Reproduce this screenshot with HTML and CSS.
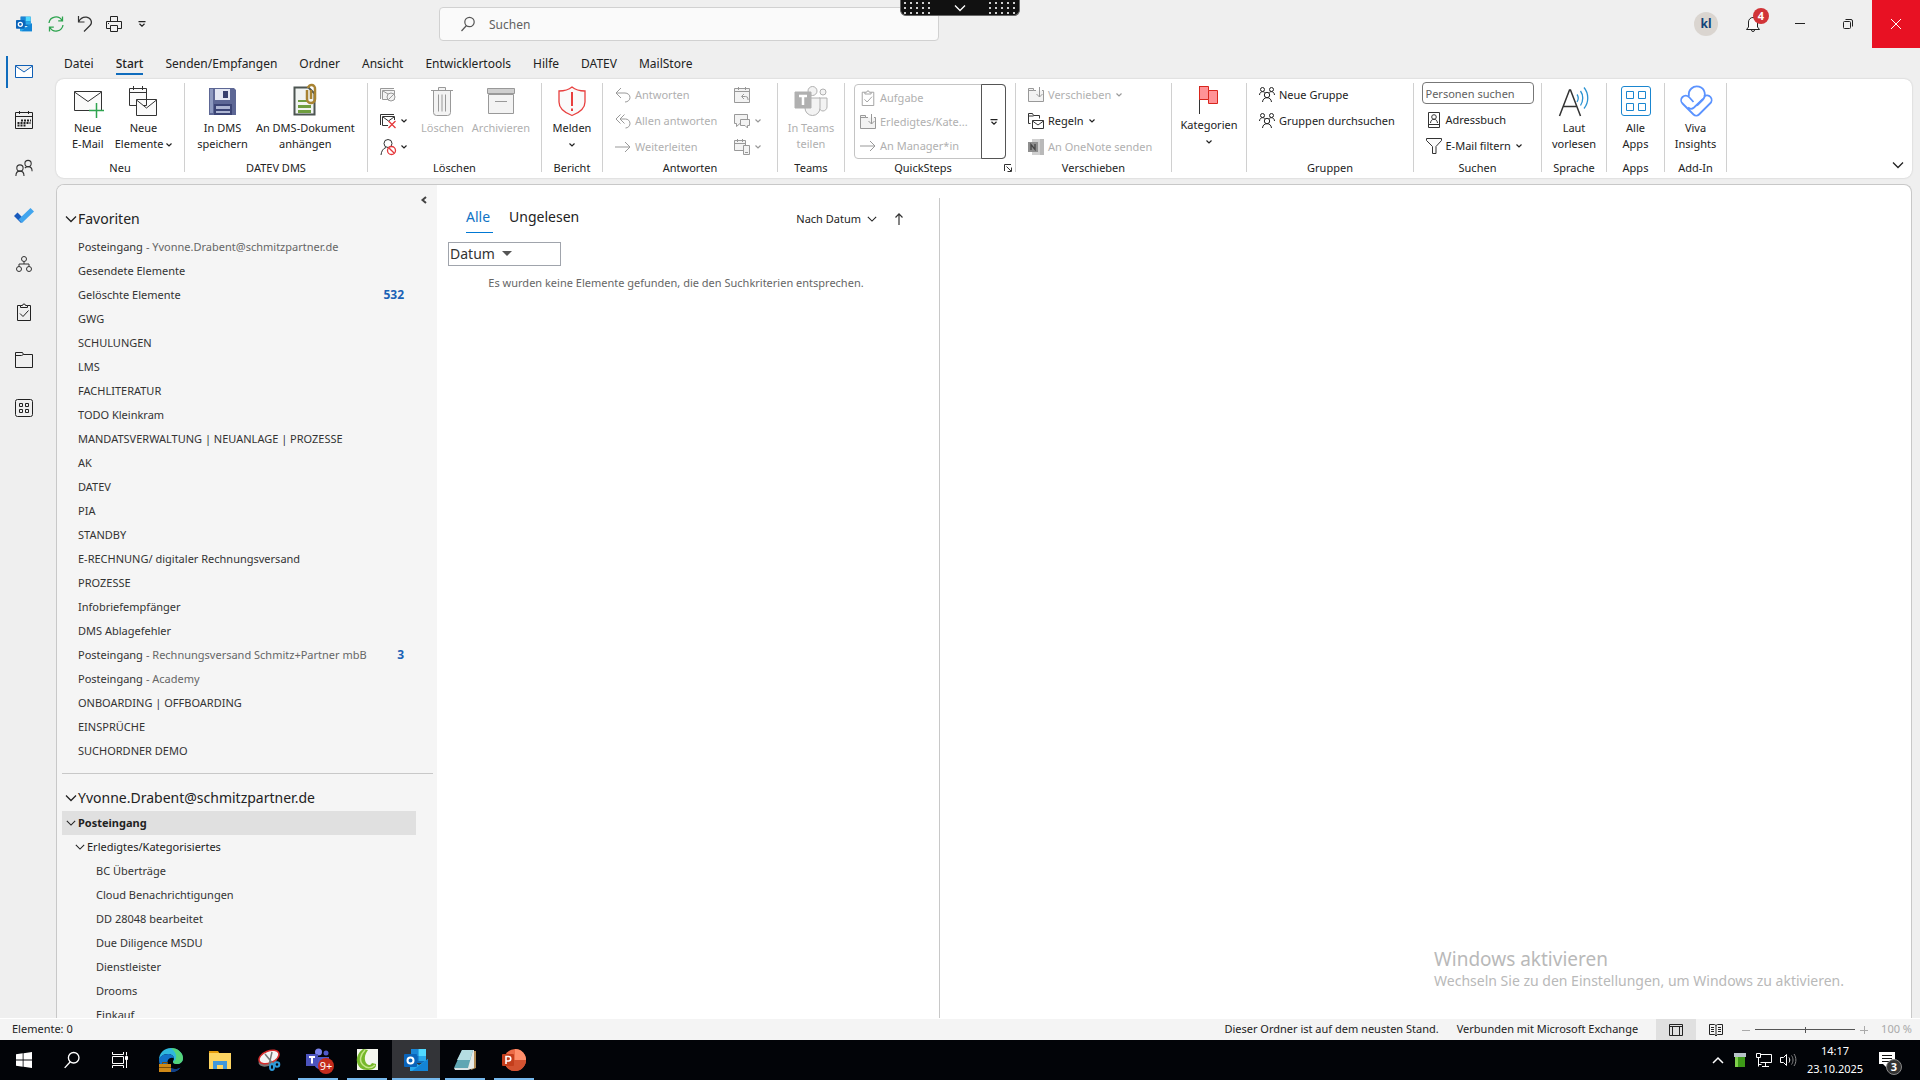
FILE: index.html
```
<!DOCTYPE html>
<html lang="de">
<head>
	<meta charset="UTF-8">
	<title>Posteingang - Outlook</title>
	<link rel="stylesheet" href="styles.css">
</head>
<body>

	<!-- shared icons -->
	<svg class="defs" aria-hidden="true">
		<symbol id="caret" viewBox="0 0 6 4"><path d="M.5 .5 3 3 5.500 .5" fill="none" stroke="currentColor" stroke-width="1.200"/></symbol>
		<symbol id="chev" viewBox="0 0 12 8"><path d="M1 1.500 6 6.500 11 1.500" fill="none" stroke="currentColor" stroke-width="1.300"/></symbol>
		<symbol id="more" viewBox="0 0 8 6"><path d="M.5 .6h7M1.500 2.800 4 5.200 6.500 2.800" fill="none" stroke="currentColor" stroke-width="1.200"/></symbol>
		<symbol id="lens" viewBox="0 0 16 16"><path d="M6.500 9.500 1.500 15" fill="none" stroke="currentColor" stroke-width="1.200"/><circle cx="9.500" cy="6" r="4.700" fill="none" stroke="currentColor" stroke-width="1.200"/></symbol>
		<symbol id="folder-move" viewBox="0 0 16 16"><path d="M8 3.500H5.500v-2h-5v13h15v-11H14" fill="#f3f3f3" stroke="currentColor"/><path d="M.5 3.500h5M11.500 0v10M8.500 7l3 3 3-3" fill="none" stroke="currentColor"/></symbol>
		<symbol id="arrow-right" viewBox="0 0 16 16"><path d="M0 8h15M10 3l5 5-5 5" fill="none" stroke="currentColor"/></symbol>
		<symbol id="people" viewBox="0 0 16 16"><g fill="none" stroke="currentColor"><circle cx="3.500" cy="2.500" r="2"/><circle cx="12.500" cy="2.500" r="2"/><circle cx="8" cy="8" r="2.700"/><path d="M.5 8c0-2 1.500-3.300 3-3.300S5.500 5 6 5.800M15.500 8c0-2-1.500-3.300-3-3.300S10.500 5 10 5.800M3.500 15c.3-2.800 2-4.300 4.500-4.300s4.200 1.500 4.500 4.300"/></g></symbol>
		<symbol id="clip-check" viewBox="0 0 16 18"><path d="M4.500 2.500h-3v15h13v-15h-3" fill="none" stroke="currentColor"/><path d="M4.500 4.500v-2h2a1.500 1.500 0 0 1 3 0h2v2zM4 10.500l3 3 5.500-6" fill="none" stroke="currentColor"/></symbol>
		<symbol id="apps" viewBox="0 0 32 32"><g fill="none" stroke="currentColor"><rect x="1.500" y="1.500" width="29" height="29" rx="2.500"/><path d="M6.500 6.500h7v7h-7zM18.500 6.500h7v7h-7zM6.500 18.500h7v7h-7zM18.500 18.500h7v7h-7z"/></g></symbol>
		<symbol id="outlook" viewBox="0 0 24 24"><path d="M7 1h15v14H7z" fill="#0f6cbd"/><path d="M7 1h7.500v7H7z" fill="#1a86d6"/><path d="M14.500 1H22v7h-7.500z" fill="#50d9ff"/><path d="M14.500 8H22v5h-7.500z" fill="#28a8ea"/><path d="M6 11l9 6 9-6v12H6z" fill="#28a8ea"/><path d="M24 11v12H8z" fill="#1384d6"/><rect y="6" width="13" height="13" rx="1" fill="#0a64ba"/><circle cx="6.500" cy="12.500" r="3" fill="none" stroke="#fff" stroke-width="2"/></symbol>
	</svg>

	<header class="titlebar">
		<div class="quick">
			<svg class="i16 logo" viewBox="0 0 24 24"><use href="#outlook"/></svg>
			<button aria-label="Senden/Empfangen"><svg class="i16" viewBox="0 0 16 16" fill="none" stroke="#2ea44f" stroke-width="1.300"><path d="M1 7a7 7 0 0 1 13-2.500M14.500.5v4.300h-4.300M15 9A7 7 0 0 1 2 11.500M1.500 15.500v-4.300h4.300"/></svg></button>
			<button aria-label="Rückgängig"><svg class="i16" viewBox="0 0 16 16" fill="none" stroke="#333" stroke-width="1.200"><path d="M1.500 0v6h6M1.500 6C3 3 6 .8 9.500 1.200c4.500.6 6.500 5.200 3.500 8.300L7 15.500"/></svg></button>
			<button aria-label="Drucken"><svg class="i16" viewBox="0 0 16 16" fill="none" stroke="#222"><path d="M4.500 5.500v-5h7v5M4.500 12.500h-4v-7h15v7h-4M4.500 9.500h7v6h-7zM2 7.500h1"/></svg></button>
			<button aria-label="Anpassen"><svg class="i8" viewBox="0 0 8 6"><use href="#more"/></svg></button>
		</div>
		<label class="search">
			<svg class="i16" viewBox="0 0 16 16"><use href="#lens"/></svg>
			<input type="text" placeholder="Suchen" aria-label="Suchen">
		</label>
		<div class="window-tools">
			<span class="avatar">kl</span>
			<button class="bell" aria-label="Benachrichtigungen">
				<svg class="i16" viewBox="0 0 16 16" fill="#fafafa" stroke="#222"><path d="M6.500 14a1.500 1.500 0 0 0 3 0M1.500 13.500l2-2.500V6a4.500 4.500 0 0 1 9 0v5l2 2.500z"/></svg>
				<span class="badge">4</span>
			</button>
			<button class="win" aria-label="Minimieren"><svg class="i10" viewBox="0 0 10 10" stroke="#222"><path d="M0 4.500h10"/></svg></button>
			<button class="win" aria-label="Verkleinern"><svg class="i10" viewBox="0 0 10 10" fill="none" stroke="#222"><rect x=".5" y="2.500" width="7" height="7" rx="1"/><path d="M2.500.5H8A1.500 1.500 0 0 1 9.500 2v5.500"/></svg></button>
			<button class="win close" aria-label="Schließen"><svg class="i10" viewBox="0 0 10 10" stroke="#fff"><path d="M0 0l10 10M10 0 0 10"/></svg></button>
		</div>
	</header>

	<!-- remote session bar, hangs over the title bar -->
	<div class="session-bar">
		<span class="dots"></span>
		<svg class="i12" viewBox="0 0 12 8"><use href="#chev"/></svg>
		<span class="dots"></span>
	</div>

	<div class="app">
		<nav class="rail" aria-label="Module">
			<a href="#" class="active" aria-label="E-Mail"><svg class="i18" viewBox="0 0 18 18" fill="#fff" stroke="#0f5fb5"><path d="M.5 2.500h17v12H.5zM.5 3 9 9l8.500-6"/></svg></a>
			<a href="#" aria-label="Kalender"><svg class="i18" viewBox="0 0 18 18" fill="none" stroke="#222"><path d="M.5 1.500h17v16H.5zM.5 5.500h17M4.500 0v3M13.500 0v3"/><path d="M6 9.500h10M2.500 12h13M2.500 14.500h8" stroke-width="2" stroke-dasharray="2 1"/></svg></a>
			<a href="#" aria-label="Personen"><svg class="i18" viewBox="0 0 20 20" fill="none" stroke="#333" stroke-width="1.200"><circle cx="5.500" cy="10" r="3.500"/><circle cx="14.500" cy="5" r="3.500"/><path d="M1 19c0-3.500 2-5.500 4.500-5.500S10 15.500 10 19M11 10c1-1 2-1.500 3.500-1.500 2.500 0 4.500 2 4.500 5"/></svg></a>
			<a href="#" aria-label="To Do"><svg class="i20" viewBox="0 0 20 20"><path d="M0 10l3.500-3.500 7 7L7 17z" fill="#185abd"/><path d="M4.500 13.500 16.500 2 20 5.500 8 17z" fill="#41a5ee"/></svg></a>
			<a href="#" aria-label="Organisation"><svg class="i16" viewBox="0 0 16 16" fill="none" stroke="#333"><circle cx="8" cy="3" r="2.500"/><circle cx="3" cy="13" r="2.500"/><circle cx="13" cy="13" r="2.500"/><path d="M8 5.500v2.500M3 10.500V8h10v2.500"/></svg></a>
			<a href="#" aria-label="Aufgaben"><svg class="i18" viewBox="0 0 16 18"><use href="#clip-check"/></svg></a>
			<a href="#" aria-label="Ordner"><svg class="i18" viewBox="0 0 18 18" fill="none" stroke="#222"><path d="M.5 16.500v-15h7l1 2h9v13zM.5 4.500h6l2-1"/></svg></a>
			<a href="#" aria-label="Weitere Apps"><svg class="i18" viewBox="0 0 18 18" fill="none" stroke="#222"><rect x=".5" y=".5" width="17" height="17" rx="2"/><path d="M4.500 4.500h3v3h-3zM10.500 4.500h3v3h-3zM4.500 10.500h3v3h-3zM10.500 10.500h3v3h-3z"/></svg></a>
		</nav>

		<div class="workspace">
			<nav class="tabs" aria-label="Menüband">
				<a href="#">Datei</a>
				<a href="#" class="active">Start</a>
				<a href="#">Senden/Empfangen</a>
				<a href="#">Ordner</a>
				<a href="#">Ansicht</a>
				<a href="#">Entwicklertools</a>
				<a href="#">Hilfe</a>
				<a href="#">DATEV</a>
				<a href="#">MailStore</a>
			</nav>

			<div class="ribbon">
				<section class="group g-new">
					<div class="tools">
						<button class="big"><svg class="i32" viewBox="0 0 32 32" fill="#fafafa" stroke="#333"><path d="M2.500 6.500h27v19h-27zM2.500 7 16 16.500 29.500 7"/><path d="M24.500 18v15M17 25.500h15" stroke="#2ea44f" stroke-width="1.500"/></svg><span>Neue<br>E-Mail</span></button>
						<button class="big"><svg class="i32" viewBox="0 0 32 32" fill="#fafafa" stroke="#333"><path d="M2.500 3.500h17v17h-17zM2.500 7.500h17M6.500 1v4M15.500 1v4"/><path d="M9.500 14.500h20v16h-20zM9.500 15l10 8 10-8"/></svg><span>Neue<br>Elemente <svg class="car" viewBox="0 0 6 4"><use href="#caret"/></svg></span></button>
					</div>
					<h2>Neu</h2>
				</section>

				<section class="group g-dms">
					<div class="tools">
						<button class="big"><svg class="i32" viewBox="0 0 32 32"><path d="M2 3h25l2 2v25H2z" fill="#5d6795"/><path d="M3 4h3v24H3z" fill="#8e9ac0"/><path d="M8 4h15v11H8z" fill="#e4e8f3"/><path d="M16 6h5v7h-5z" fill="#37406e"/><path d="M7 19h18v11H7z" fill="#3b4475"/><path d="M9 21h14v3H9zM9 26h14v2H9z" fill="#aeb6d3"/></svg><span>In DMS<br>speichern</span></button>
						<button class="big"><svg class="i32" viewBox="0 0 32 32"><path d="M5.500 2.500h14l6 6v21h-20z" fill="#f1f4f2" stroke="#4d5552" stroke-width="2"/><path d="M9 15h10v2H9zM9 20h13v3H9zM9 25h13v3H9z" fill="#6f9e3f"/><path d="M18 5v9a3.500 3.500 0 0 0 8 0V4a3.500 3.500 0 0 0-7-1M22 5v9" fill="none" stroke="#a88332" stroke-width="2.500"/></svg><span>An DMS-Dokument<br>anhängen</span></button>
					</div>
					<h2>DATEV DMS</h2>
				</section>

				<section class="group g-del">
					<div class="tools">
						<div class="rows">
							<button class="row off"><svg class="i16" viewBox="0 0 16 16" fill="#f3f3f3" stroke="currentColor"><path d="M.5 12V1.500H14M2.500 3.500h12v9h-12zM3 4l5 3"/><circle cx="11" cy="10" r="4"/><path d="M8.200 12.800l5.600-5.600"/></svg></button>
							<button class="row"><svg class="i16" viewBox="0 0 16 16" fill="none" stroke="#333"><path d="M.5 12V1.500H14M8 12.500H2.500v-9h12V7M3 4l5.500 4L14 4"/><path d="M8.500 8l7 7M15.500 8l-7 7" stroke="#e5383b" stroke-width="1.300"/></svg><svg class="car" viewBox="0 0 6 4"><use href="#caret"/></svg></button>
							<button class="row"><svg class="i16" viewBox="0 0 16 16" fill="none" stroke="#333"><circle cx="8" cy="4.500" r="4"/><path d="M1 16c.5-4 2-6.500 5-7.500"/><circle cx="11.500" cy="11.500" r="4" fill="#fff" stroke="#e5383b" stroke-width="1.300"/><path d="M8.700 8.700l5.600 5.600" stroke="#e5383b" stroke-width="1.300"/></svg><svg class="car" viewBox="0 0 6 4"><use href="#caret"/></svg></button>
						</div>
						<button class="big off"><svg class="i32" viewBox="0 0 32 32" fill="#f3f3f3" stroke="currentColor"><path d="M7.500 5.500h17v22a3 3 0 0 1-3 3h-11a3 3 0 0 1-3-3z"/><path d="M5 5.500h22M12.500 5V2.500h7V5M12.500 9.500v17M16 9.500v17M19.500 9.500v17"/></svg><span>Löschen</span></button>
						<button class="big off"><svg class="i32" viewBox="0 0 32 32" fill="#f3f3f3" stroke="currentColor"><path d="M3.500 9.500h25v19h-25z"/><path d="M2.500 3.500h27v5h-27z" fill="#cfcfcf"/><path d="M10 16.500h12"/></svg><span>Archivieren</span></button>
					</div>
					<h2>Löschen</h2>
				</section>

				<section class="group g-report">
					<div class="tools">
						<button class="big"><svg class="i32" viewBox="0 0 32 32" fill="#fafafa" stroke="#e8403f" stroke-width="1.300"><path d="M16 2c3 2.500 7 4 13 4v11c0 6-5 10.500-13 13.500C8 27.500 3 23 3 17V6c6 0 10-1.500 13-4z"/><path d="M16 7v14M16 23.500v2.500" stroke-width="2"/></svg><span>Melden<br><svg class="car" viewBox="0 0 6 4"><use href="#caret"/></svg></span></button>
					</div>
					<h2>Bericht</h2>
				</section>

				<section class="group g-reply">
					<div class="tools">
						<div class="rows">
							<button class="row off"><svg class="i16" viewBox="0 0 16 16" fill="none" stroke="currentColor"><path d="M6 1 1 6l5 5M1 6h9a5 4.500 0 0 1 0 9"/></svg>Antworten</button>
							<button class="row off"><svg class="i16" viewBox="0 0 16 16" fill="none" stroke="currentColor"><path d="M5.500 1.500 1 6l4.500 4.500M9.500 1.500 5 6l4.500 4.500M5 6h5.500a4.500 4.500 0 0 1 0 9"/></svg>Allen antworten</button>
							<button class="row off"><svg class="i16" viewBox="0 0 16 16"><use href="#arrow-right"/></svg>Weiterleiten</button>
						</div>
						<div class="rows">
							<button class="row off"><svg class="i16" viewBox="0 0 16 16" fill="#f3f3f3" stroke="currentColor"><path d="M.5 1.500h15v14H.5zM.5 4.500h15M4.500 0v3M11.500 0v3M10 7l-2.500 2.500L10 12M8 9.500h3.500a2.500 2.500 0 0 1 2.500 2.500v1"/></svg></button>
							<button class="row off"><svg class="i16" viewBox="0 0 16 16" fill="#f3f3f3" stroke="currentColor"><path d="M.5 1.500h13v9H6l-3.500 3v-3h-2z"/><path d="M6.500 6.500h9v6h-2v2.500L11 12.500H6.500z"/></svg><svg class="car" viewBox="0 0 6 4"><use href="#caret"/></svg></button>
							<button class="row off"><svg class="i16" viewBox="0 0 16 16" fill="#f3f3f3" stroke="currentColor"><path d="M.5 1.500h11v10H.5zM.5 4.500h11M3.500 0v3M8.500 0v3"/><path d="M9.500 6.500h6v9h-6zM11 13.500h3"/></svg><svg class="car" viewBox="0 0 6 4"><use href="#caret"/></svg></button>
						</div>
					</div>
					<h2>Antworten</h2>
				</section>

				<section class="group g-teams">
					<div class="tools">
						<button class="big off"><svg class="i32" viewBox="0 0 32 32" fill="#f3f3f3" stroke="#b0b0b0"><circle cx="17.500" cy="6" r="4.500"/><circle cx="28" cy="7" r="3"/><path d="M24 13h8v9c0 2-2 4-4 4s-4-2-4-4z"/><path d="M10 13h15v10a7.500 7.500 0 0 1-15 0z"/><path d="M0 7h16v16H0z" fill="#b0b0b0"/><path d="M4 11h8M8 11v9" stroke="#fff" stroke-width="2.500"/></svg><span>In Teams<br>teilen</span></button>
					</div>
					<h2>Teams</h2>
				</section>

				<section class="group g-quick">
					<div class="tools">
						<div class="gallery">
							<div class="steps">
								<button class="row off"><svg class="i16" viewBox="0 0 16 18"><use href="#clip-check"/></svg>Aufgabe</button>
								<button class="row off"><svg class="i16" viewBox="0 0 16 16"><use href="#folder-move"/></svg>Erledigtes/Kate...</button>
								<button class="row off"><svg class="i16" viewBox="0 0 16 16"><use href="#arrow-right"/></svg>An Manager*in</button>
							</div>
							<button class="expand" aria-label="Weitere QuickSteps"><svg class="i8" viewBox="0 0 8 6"><use href="#more"/></svg></button>
						</div>
					</div>
					<h2>QuickSteps</h2>
					<button class="launcher" aria-label="QuickSteps verwalten"><svg class="i8" viewBox="0 0 8 8" fill="none" stroke="#333"><path d="M.5 7V.5H7M2.500 2.500 7 7M7.500 3.500v4h-4"/></svg></button>
				</section>

				<section class="group g-move">
					<div class="tools">
						<div class="rows">
							<button class="row off"><svg class="i16" viewBox="0 0 16 16"><use href="#folder-move"/></svg>Verschieben<svg class="car" viewBox="0 0 6 4"><use href="#caret"/></svg></button>
							<button class="row"><svg class="i16" viewBox="0 0 16 16" fill="#fff" stroke="#333"><path d="M2.500 10.500h-2v-10h4l1 2h6v3M.5 3h5M4.500 7.500h11v8h-11zM4.500 8l5.500 4 5.500-4"/></svg>Regeln<svg class="car" viewBox="0 0 6 4"><use href="#caret"/></svg></button>
							<button class="row off"><svg class="i16" viewBox="0 0 16 16"><path d="M4 0h9v16H4z" fill="#d0d0d0"/><path d="M12 0h4v16h-4z" fill="#b9b9b9"/><path d="M0 3h10v10H0z" fill="#8f8f8f"/><path d="M3 11V5.500l4 5V5" fill="none" stroke="#444" stroke-width="1.300"/></svg>An OneNote senden</button>
						</div>
					</div>
					<h2>Verschieben</h2>
				</section>

				<section class="group g-cat">
					<div class="tools">
						<button class="big"><svg class="i32" viewBox="0 0 32 32"><path d="M6.500 3v28" stroke="#333"/><path d="M6.500 3.500h9v4h9v13h-9v-4h-9z" fill="#ff9296" stroke="#d8251c"/><path d="M15.500 7.500v9" stroke="#d8251c"/></svg><span>Kategorien<br><svg class="car" viewBox="0 0 6 4"><use href="#caret"/></svg></span></button>
					</div>
				</section>

				<section class="group g-groups">
					<div class="tools">
						<div class="rows">
							<button class="row"><svg class="i16" viewBox="0 0 16 16"><use href="#people"/></svg>Neue Gruppe</button>
							<button class="row"><svg class="i16" viewBox="0 0 16 16"><use href="#people"/></svg>Gruppen durchsuchen</button>
						</div>
					</div>
					<h2>Gruppen</h2>
				</section>

				<section class="group g-find">
					<div class="tools">
						<div class="rows">
							<input type="text" class="people-search" placeholder="Personen suchen" aria-label="Personen suchen">
							<button class="row"><svg class="i16" viewBox="0 0 16 16" fill="none" stroke="#333"><path d="M2.500.5h11v15h-11zM2.500 12.500h11"/><circle cx="8" cy="5" r="2.300"/><path d="M4.500 11c.3-2.500 1.500-3.700 3.500-3.700s3.200 1.200 3.500 3.700"/></svg>Adressbuch</button>
							<button class="row"><svg class="i16" viewBox="0 0 16 16" fill="#fafafa" stroke="#333"><path d="M.5.5h15v2L10 8.500v7H6.500v-7L.5 2.500z"/></svg>E-Mail filtern<svg class="car" viewBox="0 0 6 4"><use href="#caret"/></svg></button>
						</div>
					</div>
					<h2>Suchen</h2>
				</section>

				<section class="group g-voice">
					<div class="tools">
						<button class="big"><svg class="i32" viewBox="0 0 32 32" fill="none"><path d="M1.500 31 11.500 5h1l10 26M5.500 21.500h13" stroke="#333" stroke-width="1.500"/><path d="M19 9.500c1.500 2 1.500 5 0 7.500M22.500 6c3 4 3 10 0 14.500M26 2.500c5 6 5 15 0 21" stroke="#2b93d1" stroke-width="1.300"/></svg><span>Laut<br>vorlesen</span></button>
					</div>
					<h2>Sprache</h2>
				</section>

				<section class="group g-apps">
					<div class="tools">
						<button class="big blue"><svg class="i32" viewBox="0 0 32 32"><use href="#apps"/></svg><span>Alle<br>Apps</span></button>
					</div>
					<h2>Apps</h2>
				</section>

				<section class="group g-addin">
					<div class="tools">
						<button class="big"><svg class="i32" viewBox="0 0 32 32" fill="none" stroke="#5b93ff" stroke-width="1.800"><path d="M9 11a8 8 0 1 1 13.500 4L17 20.500"/><path d="M13.500 17 9 12a4.500 4.500 0 0 0-6.500 6.500l11 11c1.500 1.500 4 1.500 5.500 0l11-11a4.500 4.500 0 0 0-6-7"/><path d="M23 14 14 22.500a4.500 4.500 0 0 1-6 0"/></svg><span>Viva<br>Insights</span></button>
					</div>
					<h2>Add-In</h2>
				</section>

				<button class="collapse-ribbon" aria-label="Menüband reduzieren"><svg class="i12" viewBox="0 0 12 8"><use href="#chev"/></svg></button>
			</div>

			<main class="card">
				<aside class="folders">
					<button class="collapse-nav" aria-label="Ordnerbereich minimieren"><svg class="i8" viewBox="0 0 8 8" fill="none" stroke="#444" stroke-width="2"><path d="M6 1 2.500 4 6 7"/></svg></button>
					<h3><svg class="i12" viewBox="0 0 12 8"><use href="#chev"/></svg>Favoriten</h3>
					<ul>
						<li><a href="#">Posteingang <small>- Yvonne.Drabent@schmitzpartner.de</small></a></li>
						<li><a href="#">Gesendete Elemente</a></li>
						<li><a href="#">Gelöschte Elemente <b>532</b></a></li>
						<li><a href="#">GWG</a></li>
						<li><a href="#">SCHULUNGEN</a></li>
						<li><a href="#">LMS</a></li>
						<li><a href="#">FACHLITERATUR</a></li>
						<li><a href="#">TODO Kleinkram</a></li>
						<li><a href="#">MANDATSVERWALTUNG | NEUANLAGE | PROZESSE</a></li>
						<li><a href="#">AK</a></li>
						<li><a href="#">DATEV</a></li>
						<li><a href="#">PIA</a></li>
						<li><a href="#">STANDBY</a></li>
						<li><a href="#">E-RECHNUNG/ digitaler Rechnungsversand</a></li>
						<li><a href="#">PROZESSE</a></li>
						<li><a href="#">Infobriefempfänger</a></li>
						<li><a href="#">DMS Ablagefehler</a></li>
						<li><a href="#">Posteingang <small>- Rechnungsversand Schmitz+Partner mbB</small> <b>3</b></a></li>
						<li><a href="#">Posteingang <small>- Academy</small></a></li>
						<li><a href="#">ONBOARDING | OFFBOARDING</a></li>
						<li><a href="#">EINSPRÜCHE</a></li>
						<li><a href="#">SUCHORDNER DEMO</a></li>
					</ul>
					<hr>
					<h3><svg class="i12" viewBox="0 0 12 8"><use href="#chev"/></svg>Yvonne.Drabent@schmitzpartner.de</h3>
					<ul>
						<li class="selected"><a href="#"><svg class="i10" viewBox="0 0 12 8"><use href="#chev"/></svg>Posteingang</a></li>
						<li class="sub"><a href="#"><svg class="i10" viewBox="0 0 12 8"><use href="#chev"/></svg>Erledigtes/Kategorisiertes</a></li>
						<li class="leaf"><a href="#">BC Überträge</a></li>
						<li class="leaf"><a href="#">Cloud Benachrichtigungen</a></li>
						<li class="leaf"><a href="#">DD 28048 bearbeitet</a></li>
						<li class="leaf"><a href="#">Due Diligence MSDU</a></li>
						<li class="leaf"><a href="#">Dienstleister</a></li>
						<li class="leaf"><a href="#">Drooms</a></li>
						<li class="leaf"><a href="#">Einkauf</a></li>
					</ul>
				</aside>

				<section class="messages">
					<div class="filters">
						<a href="#" class="active">Alle</a>
						<a href="#">Ungelesen</a>
						<button class="sort">Nach Datum <svg class="i10" viewBox="0 0 12 8"><use href="#chev"/></svg></button>
						<button class="order" aria-label="Aufsteigend"><svg class="i12" viewBox="0 0 12 12" fill="none" stroke="#333" stroke-width="1.200"><path d="M6 12V.8M2.500 4.500 6 .8l3.500 3.700"/></svg></button>
					</div>
					<div class="date-box">
						<select aria-label="Sortierung"><option>Datum</option></select>
					</div>
					<p>Es wurden keine Elemente gefunden, die den Suchkriterien entsprechen.</p>
				</section>

				<section class="reading">
					<div class="watermark">
						<strong>Windows aktivieren</strong>
						<span>Wechseln Sie zu den Einstellungen, um Windows zu aktivieren.</span>
					</div>
				</section>
			</main>
		</div>
	</div>

	<footer class="status">
		<span class="count">Elemente: 0</span>
		<span>Dieser Ordner ist auf dem neusten Stand.</span>
		<span>Verbunden mit Microsoft Exchange</span>
		<div class="views">
			<button class="active" aria-label="Normal"><svg class="i14" viewBox="0 0 14 14" fill="none" stroke="#222"><path d="M.5 1.500h13v11H.5zM.5 3.500h13M3.500 3.500v9M10.500 3.500v9"/></svg></button>
			<button aria-label="Lesen"><svg class="i14" viewBox="0 0 14 14" fill="none" stroke="#222"><path d="M.5 1.500h5L7 2.500l1.500-1h5v10h-5L7 13l-1.500-1.500h-5zM7 2.500V13M2 4.500h3M2 6.500h3M2 8.500h3M9 4.500h3M9 6.500h3M9 8.500h3"/></svg></button>
		</div>
		<div class="zoom">
			<button aria-label="Verkleinern"><svg class="i8" viewBox="0 0 8 8" stroke="currentColor"><path d="M0 4.500h8"/></svg></button>
			<input type="range" aria-label="Zoom" min="0" max="100" value="50">
			<button aria-label="Vergrößern"><svg class="i8" viewBox="0 0 8 8" stroke="currentColor"><path d="M0 4.500h8M4.500 0v8"/></svg></button>
			<span>100 %</span>
		</div>
	</footer>

	<footer class="taskbar">
		<div class="system">
			<button aria-label="Start"><svg class="i16" viewBox="0 0 16 16" fill="#fff"><path d="M0 2.200 6.700 1.300v6.300H0zM7.500 1.200 16 0v7.600H7.500zM0 8.400h6.700v6.300L0 13.800zM7.500 8.400H16V16l-8.500-1.200z"/></svg></button>
			<button aria-label="Suche"><svg class="i18" viewBox="0 0 16 16"><use href="#lens"/></svg></button>
			<button aria-label="Aufgabenansicht"><svg class="i16" viewBox="0 0 16 16" fill="none" stroke="#fff"><path d="M.5 4.500h11v7H.5zM.5 0v2.500h11V0M.5 16v-2.500h11V16M14.500 0v3.500M14.500 8v8"/><path d="M13.500 4.500h2v3h-2z" fill="#fff"/></svg></button>
		</div>
		<div class="programs">
			<button aria-label="Edge"><svg class="i24" viewBox="0 0 24 24"><path d="M0 12C0 5 5 0 12 0s12 5 12 10c0 4-3 6-6 6-3.500 0-4-1.500-4-2.500 0-1 1-1.500 1-3C15 8 12 6 9 6 4 6 1 9 0 12z" fill="#2fb8dd"/><path d="M12 0c7 0 12 5 12 10 0 4-3 6-6 6-3.500 0-4-1.500-4-2.500 3 0 6-7-2-13.500z" fill="#5edb62" opacity=".8"/><path d="M0 12c0-3 4-6 9-6 3 0 6 2 6 4.500-1.500-1.500-4.500-1-6 1.500-2 4 1 9 7 9 2 0 4-.5 5.500-1.500C19.500 22.500 16 24 12 24 5 24 0 18.500 0 12z" fill="#1272c8"/><path d="M9 12c-2 4 1 9 7 9 2 0 4-.5 5.500-1.500C19.500 22.500 16 24 12 24c-4-2-6-8-3-12z" fill="#123e86"/><path d="M0 16h12v8H0z" fill="#d08a18"/><path d="M3.500 16v-1.500h5V16M0 19.500h12" fill="none" stroke="#7d4c05"/></svg></button>
			<button aria-label="Explorer"><svg class="i24" viewBox="0 0 24 24"><path d="M1 3h9l2 3H1z" fill="#e59c0c"/><path d="M1 5h22v16H1z" fill="#fcd462"/><path d="M5 13h14v8h-4v-4H9v4H5z" fill="#3f97dc"/></svg></button>
			<button aria-label="Snipping Tool"><svg class="i24" viewBox="0 0 24 24"><ellipse cx="11" cy="12" rx="10" ry="6" transform="rotate(-22 11 12)" fill="#777"/><ellipse cx="12" cy="9" rx="10.500" ry="6" transform="rotate(-22 12 9)" fill="#f4f4f4" stroke="#d92c2c" stroke-width="1.500"/><path d="M8 6l9 11M15 4l-3 13" stroke="#777" stroke-width="1.500"/><g fill="none" stroke="#2d9adb" stroke-width="2"><ellipse cx="15" cy="19" rx="2" ry="3"/><circle cx="20" cy="16.500" r="2.300"/></g></svg></button>
			<button class="open" aria-label="Teams"><svg class="i24" viewBox="0 0 24 24"><circle cx="12.500" cy="4" r="3.500" fill="#7b83eb"/><circle cx="20" cy="5" r="2.500" fill="#5059c9"/><path d="M8 9h15v7a6 6 0 0 1-6 6c-5 0-9-3-9-7z" fill="#5059c9"/><path d="M0 6h12v12H0z" fill="#4b53bc"/><path d="M3 9h6M6 9v6.500" stroke="#fff" stroke-width="2"/></svg><span class="badge">9+</span></button>
			<button class="open" aria-label="Telefon"><svg class="i24" viewBox="0 0 24 24"><path d="M2 1h21v21H2z" fill="#f4f6ee"/><path d="M8 1C4 4 1 9 2 14c1 5 5 8 10 8 4 0 8-1 9-4v-2l-4-1c-1 2-3 3-5 1-3-3-3-9 1-14z" fill="#76b82a"/><path d="M10 2C5 7 4 13 8 17s9 3 12 0" fill="none" stroke="#c5e588" stroke-width="1.500"/></svg></button>
			<button class="open active" aria-label="Outlook"><svg class="i24" viewBox="0 0 24 24"><use href="#outlook"/></svg></button>
			<button class="open" aria-label="Editor"><svg class="i24" viewBox="0 0 24 24"><path d="M20 3l3 0v17l-5 2z" fill="#b08a52"/><path d="M10 2h11v18l-6 2z" fill="#e6e9e5"/><path d="M9 2h11l-5 18H1z" fill="#5fa6b3"/><path d="M9 2h11l-3 10H4z" fill="#b5dde2"/><path d="M1 20h14v2H2z" fill="#d8e4e6"/></svg></button>
			<button class="open" aria-label="PowerPoint"><svg class="i24" viewBox="0 0 24 24"><circle cx="13" cy="12" r="11" fill="#ed6c47"/><path d="M13 1a11 11 0 0 1 11 11H13z" fill="#ff8f6b"/><path d="M2 12h22a11 11 0 0 1-22 0z" fill="#d35230"/><rect y="6" width="12" height="12" rx="1" fill="#c43e1c"/><path d="M4 16V8.500h2.500a2.200 2.200 0 0 1 0 4.500H4" fill="none" stroke="#fff" stroke-width="1.600"/></svg></button>
		</div>
		<div class="tray">
			<button aria-label="Ausgeblendete Symbole"><svg class="i12" viewBox="0 0 12 8" fill="none" stroke="#fff" stroke-width="1.500"><path d="M1 7l5-5 5 5"/></svg></button>
			<svg class="i16" viewBox="0 0 16 16"><path d="M2 1h12v4H2z" fill="#b8c2c8"/><path d="M3 5h10v10H3z" fill="#3d9a17"/><path d="M3 5h3v10H3z" fill="#7fcf4c"/></svg>
			<svg class="i16" viewBox="0 0 16 16" fill="none" stroke="#fff"><path d="M4.500 2.500h11v8h-11M.5 1.500h4v4h-4zM2.500 5.500v9M9.500 10.500v4M6 14.500h7M2.500 12.500h3"/></svg>
			<svg class="i16" viewBox="0 0 16 16" fill="none" stroke="#fff"><path d="M.5 5.500h3l3-3v11l-3-3h-3zM9 5.500c1 1.500 1 3.500 0 5"/><path d="M11.500 3.500c2 2.500 2 6.500 0 9M14 2c2.500 3.500 2.500 8.500 0 12" stroke="#888"/></svg>
			<div class="clock"><time>14:17</time><time>23.10.2025</time></div>
			<button class="notes" aria-label="Info-Center"><svg class="i16" viewBox="0 0 16 16"><path d="M0 0h16v12H8v4l-4-4H0z" fill="#fff"/><path d="M3 3.500h10M3 6.500h10M3 9.500h7" stroke="#111"/></svg><span class="badge">3</span></button>
		</div>
	</footer>

</body>
</html>
```
FILE: styles.css
```
* {
	box-sizing: border-box;
}

body {
	background: #efefef;
	color: #222;
	display: flex;
	flex-direction: column;
	font: 11px/16px "Noto Sans", sans-serif;
	height: 100vh;
	margin: 0;
	overflow: hidden;
}

a {
	color: inherit;
	text-decoration: none;
}

button {
	align-items: center;
	background: none;
	border: 0;
	color: inherit;
	display: flex;
	font: inherit;
	justify-content: center;
	padding: 0;
}

input, select {
	font: inherit;
}

h2, h3, p, ul {
	font-weight: normal;
	list-style: none;
	margin: 0;
	padding: 0;
}

svg {
	flex: none;
	overflow: visible;
}

.defs { height: 0; position: absolute; width: 0; }
.i8 { height: 8px; width: 8px; }
.i10 { height: 10px; width: 10px; }
.i12 { height: 12px; width: 12px; }
.i14 { height: 14px; width: 14px; }
.i16 { height: 16px; width: 16px; }
.i18 { height: 18px; width: 18px; }
.i20 { height: 20px; width: 20px; }
.i24 { height: 24px; width: 24px; }
.i32 { height: 32px; width: 32px; }
.car { height: 4px; vertical-align: middle; width: 6px; }

/* title bar */

.titlebar {
	display: flex;
	flex: none;
	font-size: 12px;
	height: 48px;
}

.quick {
	align-items: center;
	display: flex;
	flex: 0 0 439px;
	gap: 13px;
	padding-left: 16px;
}

.quick .logo {
	margin-right: 3px;
}

.quick .i8 {
	margin-left: 3px;
}

.search {
	align-items: center;
	align-self: center;
	background: #fafafa;
	border: 1px solid #d1d1d1;
	border-radius: 4px;
	color: #555;
	display: flex;
	flex: 0 1 500px;
	gap: 13px;
	height: 34px;
	padding: 0 20px;
}

.search input {
	background: none;
	border: 0;
	flex: 1;
	outline: 0;
	padding: 2px 0 0;
}

::placeholder {
	color: #616161;
	opacity: 1;
}

.window-tools {
	align-items: center;
	display: flex;
	margin-left: auto;
}

.avatar {
	background: #dad5d0;
	border-radius: 50%;
	color: #0f4278;
	font-weight: bold;
	height: 24px;
	line-height: 24px;
	margin-right: 27px;
	text-align: center;
	width: 24px;
}

.badge {
	background: #d13438;
	border-radius: 8px;
	color: #fff;
	font-size: 11px;
	font-weight: bold;
	height: 16px;
	line-height: 16px;
	position: absolute;
	text-align: center;
	width: 16px;
}

.bell {
	margin-right: 15px;
	position: relative;
}

.bell .badge {
	left: 8px;
	top: -8px;
}

.win {
	height: 48px;
	width: 48px;
}

.close {
	background: #e81123;
}

.session-bar {
	align-items: center;
	background: #111;
	border: 1px solid #666;
	border-radius: 0 0 6px 6px;
	border-top: 0;
	color: #fff;
	display: flex;
	height: 16px;
	justify-content: space-between;
	left: 50%;
	margin-left: -60px;
	padding: 0 3px;
	position: absolute;
	top: 0;
	width: 120px;
}

.dots {
	background: radial-gradient(circle at 1px 1px, #ccc 1px, transparent 1px) 0 0 / 6px 5px;
	height: 12px;
	width: 27px;
}

/* frame */

.app {
	display: flex;
	flex: 1;
	min-height: 0;
}

.rail {
	flex: 0 0 56px;
}

.rail a {
	align-items: center;
	display: flex;
	height: 48px;
	justify-content: center;
	padding-right: 8px;
}

.rail .active {
	background: linear-gradient(#0f6cbd, #0f6cbd) 6px 8px / 2px 32px no-repeat;
}

.workspace {
	display: flex;
	flex: 1;
	flex-direction: column;
	min-width: 0;
	padding-right: 8px;
}

.tabs {
	display: flex;
	flex: none;
	font-size: 12px;
	gap: 22px;
	height: 31px;
	line-height: 31px;
	padding-left: 8px;
}

.tabs .active {
	background: linear-gradient(#0f6cbd, #0f6cbd) 0 25px / 100% 2px no-repeat;
	font-weight: 500;
}

/* ribbon */

.ribbon {
	background: #fff;
	border-radius: 8px;
	box-shadow: 0 0 2px rgba(0, 0, 0, .2);
	display: flex;
	flex: none;
	height: 99px;
	margin-bottom: 6px;
	padding: 4px 0 6px;
}

.group {
	border-right: 1px solid #d0d0d0;
	display: flex;
	flex: none;
	flex-direction: column;
	position: relative;
}

.group h2 {
	font-size: 11px;
	margin: auto 0 -4px;
	text-align: center;
}

.tools {
	display: flex;
	justify-content: center;
}

.g-new { width: 129px; }
.g-dms { width: 183px; }
.g-del { width: 174px; }
.g-report { width: 61px; }
.g-reply { width: 175px; }
.g-teams { width: 67px; }
.g-quick { width: 171px; }
.g-move { width: 156px; }
.g-cat { width: 75px; }
.g-groups { width: 167px; }
.g-find { width: 128px; }
.g-voice { width: 65px; }
.g-apps { width: 58px; }
.g-addin { width: 62px; }

.big {
	flex-direction: column;
	gap: 3px;
	justify-content: flex-start;
	padding: 2px 4px 0;
	white-space: nowrap;
}

.g-cat .big {
	gap: 2px;
	padding-top: 0;
}

.blue svg {
	color: #1a86d0;
}

.off {
	color: #b0b0b0;
}

.off svg {
	color: #999;
}

.rows {
	display: flex;
	flex: none;
	flex-direction: column;
	margin-top: -1px;
}

.row {
	gap: 4px;
	height: 26px;
	justify-content: flex-start;
	white-space: nowrap;
}

.row .car {
	margin-left: 1px;
}

.g-new .tools {
	gap: 3px;
	padding-left: 4px;
}

.g-del .tools,
.g-reply .tools,
.g-move .tools,
.g-groups .tools {
	justify-content: flex-start;
	padding-left: 12px;
}

.g-del .rows {
	width: 37px;
}

.g-reply .rows:first-child {
	width: 119px;
}

.g-quick h2 {
	padding-right: 14px;
}

.gallery {
	border: 1px solid #c4c4c4;
	border-radius: 4px;
	display: flex;
	height: 75px;
	margin-top: 1px;
	width: 152px;
}

.steps {
	flex: 1;
	padding: 1px 0 0 5px;
}

.steps .row {
	height: 24px;
}

.expand {
	border: 1px solid #555;
	border-radius: 0 4px 4px 0;
	margin: -1px;
	width: 25px;
}

.launcher {
	bottom: 0;
	position: absolute;
	right: 3px;
}

.people-search {
	background: #fff;
	border: 1px solid #777;
	border-radius: 4px;
	height: 22px;
	margin-bottom: 3px;
	padding: 0 3px;
	width: 112px;
}

.g-find .row {
	padding-left: 4px;
}

.collapse-ribbon {
	align-self: flex-end;
	margin: 0 8px 1px auto;
}

/* content card */

.card {
	background: #fff;
	border: 1px solid #c8c8c8;
	border-bottom: 0;
	border-radius: 8px 8px 0 0;
	display: flex;
	flex: 1;
	min-height: 0;
	overflow: hidden;
}

.folders {
	background: #f5f5f5;
	color: #333;
	flex: 0 0 380px;
	overflow: hidden;
	padding: 9px 4px 0 5px;
}

.collapse-nav {
	height: 12px;
	margin: 0 5px 0 auto;
}

.folders h3 {
	align-items: center;
	color: #222;
	display: flex;
	font-size: 14px;
	gap: 1px;
	height: 26px;
	padding-left: 3px;
}

.folders ul {
	margin-right: 17px;
}

.collapse-nav + h3 {
	margin-bottom: 3px;
}

.folders a {
	align-items: center;
	display: flex;
	gap: 3px;
	height: 24px;
	padding-left: 16px;
}

.folders .selected a,
.folders .sub a {
	color: #222;
	gap: 2px;
	padding-left: 4px;
}

.folders .selected {
	background: #e0e0e0;
	font-weight: bold;
}

.folders .sub a {
	padding-left: 13px;
}

.folders .leaf a {
	padding-left: 34px;
}

.folders small {
	color: #666;
	font-size: 11px;
}

.folders b {
	color: #1a62b5;
	font-size: 12px;
	margin-left: auto;
	padding-right: 12px;
}

.folders hr {
	border: 0;
	border-top: 1px solid #c8c8c8;
	margin: 10px 0 11px;
}

.messages {
	border-right: 1px solid #c8c8c8;
	flex: 0 0 503px;
	margin-top: 13px;
}

.filters {
	display: flex;
	font-size: 14px;
	gap: 16px;
	line-height: 38px;
	padding: 0 34px 0 29px;
}

.filters .active {
	background: linear-gradient(#0078d4, #0078d4) 0 34px / 100% 1px no-repeat;
	color: #0f73c4;
	padding-right: 3px;
}

.filters button {
	padding-top: 2px;
}

.sort {
	font-size: 11px;
	gap: 6px;
	margin-left: auto;
}

.date-box {
	font-size: 14px;
	margin: 4px 0 9px 11px;
	position: relative;
	width: 113px;
}

.date-box select {
	appearance: none;
	background: #fff;
	border: 1px solid #a0a4ac;
	border-radius: 0;
	color: #333;
	display: block;
	height: 24px;
	padding: 0 1px;
	width: 100%;
}

.date-box::after {
	border: 5px solid transparent;
	border-bottom: 0;
	border-top-color: #555;
	content: "";
	left: 54px;
	position: absolute;
	top: 9px;
}

.messages p {
	color: #666;
	padding: 0 52px 0 28px;
	text-align: center;
	white-space: nowrap;
}

.reading {
	flex: 1;
	position: relative;
}

.watermark {
	bottom: 26px;
	color: #b9b9b9;
	font-size: 14px;
	line-height: 22px;
	position: absolute;
	right: 67px;
}

.watermark strong {
	display: block;
	font-size: 19px;
	font-weight: normal;
}

/* status bar */

.status {
	align-items: center;
	background: #f4f4f4;
	border-top: 1px solid #fff;
	display: flex;
	flex: none;
	gap: 18px;
	height: 22px;
	padding: 0 8px 0 12px;
}

.status span {
	padding-bottom: 2px;
}

.count {
	margin-right: auto;
}

.views {
	display: flex;
}

.views button {
	height: 21px;
	width: 40px;
}

.views .active {
	background: #e0e0e0;
}

.zoom {
	align-items: center;
	color: #aaa;
	display: flex;
	gap: 5px;
	margin-left: -12px;
}

.zoom span {
	margin-left: 8px;
}

.zoom input {
	appearance: none;
	background: linear-gradient(#555, #555) 0 50% / 100% 1px no-repeat;
	height: 8px;
	margin: 0;
	width: 100px;
}

.zoom input::-webkit-slider-thumb {
	appearance: none;
	background: #555;
	height: 6px;
	width: 1px;
}

/* taskbar */

.taskbar {
	background: #020408;
	color: #fff;
	display: flex;
	flex: none;
	height: 40px;
}

.system,
.programs,
.tray {
	align-items: center;
	display: flex;
}

.system button,
.programs button {
	height: 40px;
	position: relative;
	width: 48px;
}

.programs {
	gap: 1px;
	margin-left: 3px;
}

.programs .open {
	background: linear-gradient(#76b9ed, #76b9ed) 50% 100% / 40px 2px no-repeat;
}

.programs .active {
	background: linear-gradient(#76b9ed, #76b9ed) 50% 100% / 48px 2px no-repeat #333438;
}

.programs .badge {
	background: #c42b1c;
	font-weight: normal;
	left: 24px;
	top: 18px;
}

.tray {
	gap: 8px;
	margin-left: auto;
}

.clock {
	display: flex;
	flex-direction: column;
	line-height: 18px;
	margin-right: 5px;
	text-align: center;
	width: 62px;
}

.notes {
	height: 40px;
	margin-right: 25px;
	position: relative;
}

.notes .badge {
	background: #333;
	border: 1px solid #888;
	left: 7px;
	line-height: 14px;
	top: 19px;
}
```
